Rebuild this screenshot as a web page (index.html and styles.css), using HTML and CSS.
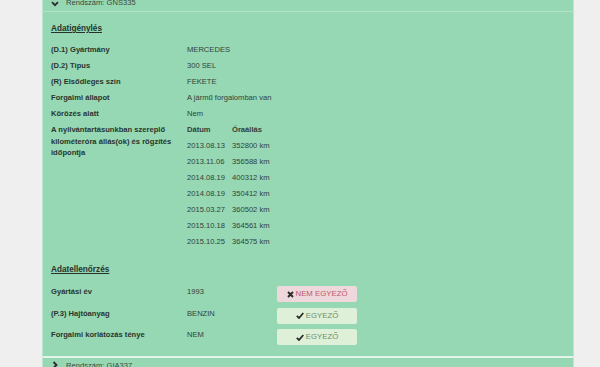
FILE: index.html
```html
<!DOCTYPE html>
<html lang="hu">
<head>
  <meta charset="UTF-8" />
  <title>Járműadatok</title>
  <link rel="stylesheet" href="styles.css">
</head>
<body>
  <div class="wrap">
    <div class="panel">
      <div class="panel-head">
        <svg class="chev" width="8" height="6" viewBox="0 0 8 6"><path d="M1 1.2 L4 4.2 L7 1.2" fill="none" stroke="#2b2b2b" stroke-width="1.8"/></svg>
        <span>Rendszám: GNS335</span>
      </div>
      <div class="panel-body">
        <h3 class="section-title">Adatigénylés</h3>
        <div class="data-grid">
          <div class="label">(D.1) Gyártmány</div><div class="value">MERCEDES</div>
          <div class="label">(D.2) Típus</div><div class="value">300 SEL</div>
          <div class="label">(R) Elsődleges szín</div><div class="value">FEKETE</div>
          <div class="label">Forgalmi állapot</div><div class="value">A jármű forgalomban van</div>
          <div class="label">Körözés alatt</div><div class="value">Nem</div>
          <div class="label label-wrap">A nyilvántartásunkban szereplő kilométeróra állás(ok) és rögzítés időpontja</div>
          <div class="value">
            <div class="km-table">
              <div class="th">Dátum</div><div class="th">Óraállás</div>
              <div>2013.08.13</div><div>352800 km</div>
              <div>2013.11.06</div><div>356588 km</div>
              <div>2014.08.19</div><div>400312 km</div>
              <div>2014.08.19</div><div>350412 km</div>
              <div>2015.03.27</div><div>360502 km</div>
              <div>2015.10.18</div><div>364561 km</div>
              <div>2015.10.25</div><div>364575 km</div>
            </div>
          </div>
        </div>

        <h3 class="section-title second">Adatellenőrzés</h3>
        <div class="check-row">
          <div class="label">Gyártási év</div>
          <div class="value">1993</div>
          <div class="badge badge-bad">
            <svg width="7" height="7" viewBox="0 0 7 7"><path d="M1 1 L6 6 M6 1 L1 6" stroke="#2b2b2b" stroke-width="1.9"/></svg>
            NEM EGYEZŐ
          </div>
        </div>
        <div class="check-row">
          <div class="label">(P.3) Hajtóanyag</div>
          <div class="value">BENZIN</div>
          <div class="badge badge-ok">
            <svg width="8" height="7" viewBox="0 0 8 7"><path d="M0.8 3.8 L3 6 L7.3 1" fill="none" stroke="#2b2b2b" stroke-width="1.8"/></svg>
            EGYEZŐ
          </div>
        </div>
        <div class="check-row">
          <div class="label">Forgalmi korlátozás ténye</div>
          <div class="value">NEM</div>
          <div class="badge badge-ok">
            <svg width="8" height="7" viewBox="0 0 8 7"><path d="M0.8 3.8 L3 6 L7.3 1" fill="none" stroke="#2b2b2b" stroke-width="1.8"/></svg>
            EGYEZŐ
          </div>
        </div>
      </div>
    </div>

    <div class="panel next">
      <div class="panel-head">
        <svg class="chev" width="8" height="8" viewBox="0 0 8 8"><path d="M2.5 1 L5.5 4 L2.5 7" fill="none" stroke="#2b2b2b" stroke-width="1.8"/></svg>
        <span>Rendszám: GIA337</span>
      </div>
    </div>
  </div>
</body>
</html>
```

FILE: styles.css
```css
body {
  margin: 0;
  background-color: #efefef;
  font-family: 'Liberation Sans', Arial, sans-serif;
  font-size: 7.6px;
  color: #34413a;
}

.wrap {
  width: 532px;
  margin-left: 42px;
}

.panel {
  background-color: #95d8b3;
  border-left: 1px solid #b9e6cc;
  border-right: 1px solid #b9e6cc;
}

.panel-head {
  height: 12px;
  display: flex;
  align-items: flex-end;
  gap: 7px;
  padding: 0 0 3px 8px;
  box-sizing: border-box;
  line-height: 10px;
  color: #3a4a40;
  border-bottom: 1px solid #b3e4c8;
}

.panel-head .chev {
  margin-bottom: 1px;
}

.panel-body {
  padding: 9px 8px 8px;
}

.section-title {
  margin: 0 0 5px;
  font-size: 8.2px;
  font-weight: bold;
  line-height: 16px;
  text-decoration: underline;
  color: #26322b;
}

.section-title.second {
  margin-top: 12px;
}

.data-grid {
  display: grid;
  grid-template-columns: 136px auto;
  line-height: 16px;
}

.label {
  font-weight: bold;
  color: #2a352e;
}

.label-wrap {
  width: 124px;
  line-height: 11.5px;
  padding-top: 2px;
}

.km-table {
  display: grid;
  grid-template-columns: 45px auto;
}

.km-table .th {
  font-weight: bold;
}

.check-row {
  display: grid;
  grid-template-columns: 136px 90px 80px;
  height: 21.5px;
  line-height: 18px;
}

.badge {
  margin-top: 3px;
  height: 16px;
  border-radius: 2px;
  display: flex;
  align-items: center;
  justify-content: center;
  gap: 2px;
  line-height: 16px;
  font-size: 7.8px;
}

.badge-bad {
  background-color: #efd8db;
  color: #c0576a;
}

.badge-ok {
  background-color: #def0d7;
  color: #6d8e6b;
}

.panel.next {
  border-top: 2px solid #e3f4e9;
}

.panel.next .panel-head {
  height: 14px;
  align-items: flex-start;
  padding-top: 3px;
  border-bottom: none;
}
```
